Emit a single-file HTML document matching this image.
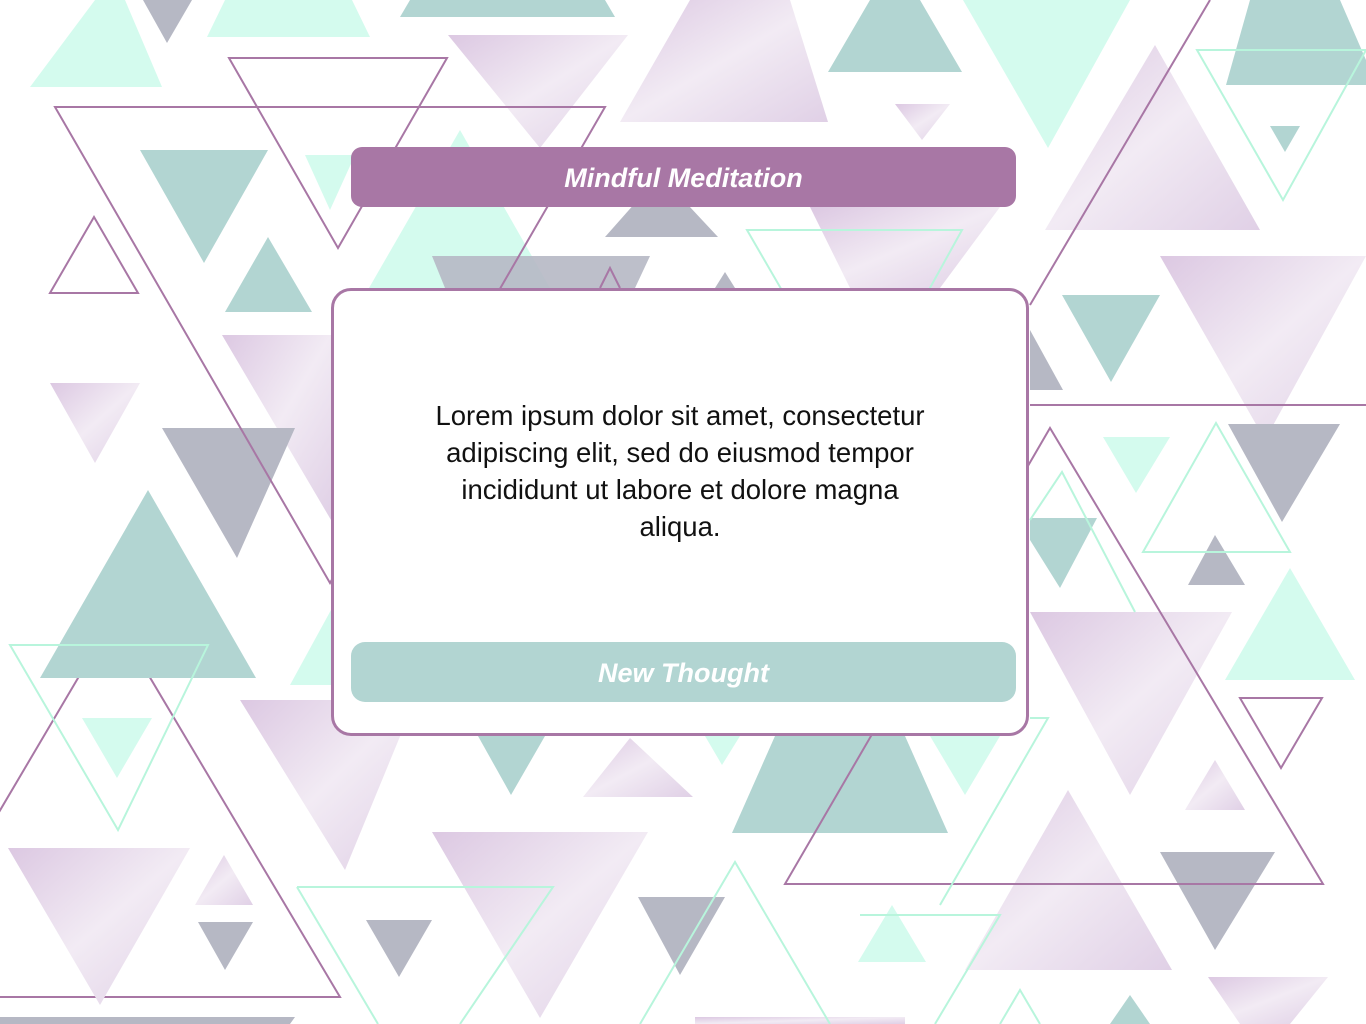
<!DOCTYPE html>
<html><head><meta charset="utf-8"><style>
html,body{margin:0;padding:0;overflow:hidden;}
body{width:1366px;height:1024px;position:relative;overflow:hidden;background:#fff;font-family:"Liberation Sans",sans-serif;}
svg.bg{position:absolute;left:0;top:0;overflow:hidden;}
.hdr{position:absolute;left:351px;top:147px;width:665px;height:60px;background:#a877a5;border-radius:11px;color:#fff;font-weight:bold;font-style:italic;font-size:27px;text-align:center;line-height:62px;}
.card{position:absolute;left:331px;top:288px;width:692px;height:442px;border:3px solid #a877a5;border-radius:20px;background:#fff;}
.txt{position:absolute;left:0;width:100%;top:106px;text-align:center;font-size:27.5px;line-height:37px;color:#111;}
.btn{position:absolute;left:351px;top:642px;width:665px;height:60px;background:#b2d5d2;border-radius:14px;color:#fff;font-weight:bold;font-style:italic;font-size:27px;text-align:center;line-height:62px;}
</style></head><body>
<svg class="bg" width="1366" height="1024" viewBox="0 0 1366 1024">
<defs>
<linearGradient id="m" x1="0" y1="0" x2="1" y2="1">
<stop offset="0" stop-color="#dcc8e2"/><stop offset="0.5" stop-color="#f2ebf4"/><stop offset="1" stop-color="#e0d0e6"/>
</linearGradient>
</defs>
<polygon points="-110,997 340,997 114,617" fill="none" stroke="#a877a5" stroke-width="2"/>
<g fill="url(#m)">
<polygon points="448,35 628,35 540,148"/>
<polygon points="620,122 690,0 790,0 828,122"/>
<polygon points="895,104 950,104 922,140"/>
<polygon points="1045,230 1155,45 1260,230"/>
<polygon points="1160,256 1366,256 1265,440"/>
<polygon points="810,207 1000,207 940,288 850,288"/>
<polygon points="222,335 331,335 331,520"/>
<polygon points="50,383 140,383 95,463"/>
<polygon points="1030,612 1232,612 1130,795"/>
<polygon points="240,700 415,700 345,870"/>
<polygon points="583,797 630,738 693,797"/>
<polygon points="432,832 648,832 540,1018"/>
<polygon points="8,848 190,848 100,1005"/>
<polygon points="195,905 224,855 253,905"/>
<polygon points="965,970 1068,790 1172,970"/>
<polygon points="1185,810 1215,760 1245,810"/>
<polygon points="1208,977 1328,977 1290,1024 1240,1024"/>
<polygon points="695,1017 905,1017 905,1024 695,1024"/>
</g>
<g fill="#d4fbee">
<polygon points="30,87 95,0 125,0 162,87"/>
<polygon points="207,37 225,0 352,0 370,37"/>
<polygon points="963,0 1130,0 1048,148"/>
<polygon points="369,288 460,130 550,288"/>
<polygon points="305,155 355,155 330,210"/>
<polygon points="1103,437 1170,437 1136,493"/>
<polygon points="1225,680 1290,568 1355,680"/>
<polygon points="82,718 152,718 117,778"/>
<polygon points="858,962 892,905 926,962"/>
<polygon points="290,685 331,610 331,685"/>
<polygon points="930,736 1000,736 965,795"/>
<polygon points="705,736 740,736 722,765"/>
</g>
<g fill="#b2d5d2">
<polygon points="400,17 410,0 605,0 615,17"/>
<polygon points="828,72 870,0 920,0 962,72"/>
<polygon points="1226,85 1250,0 1340,0 1366,60 1366,85"/>
<polygon points="140,150 268,150 204,263"/>
<polygon points="225,312 268,237 312,312"/>
<polygon points="1062,295 1160,295 1111,382"/>
<polygon points="40,678 148,490 256,678"/>
<polygon points="732,833 775,736 905,736 948,833"/>
<polygon points="478,736 545,736 511,795"/>
<polygon points="1030,518 1097,518 1060,588 1030,540"/>
<polygon points="1270,126 1300,126 1285,152"/>
<polygon points="1110,1024 1130,995 1150,1024"/>
</g>
<g fill="#b6b8c4">
<polygon points="143,0 192,0 167,43"/>
<polygon points="605,237 660,175 718,237"/>
<polygon points="432,256 650,256 635,288 445,288" opacity="0.9"/>
<polygon points="162,428 295,428 237,558"/>
<polygon points="1228,424 1340,424 1282,522"/>
<polygon points="1188,585 1215,535 1245,585"/>
<polygon points="1160,852 1275,852 1215,950"/>
<polygon points="638,897 725,897 680,975"/>
<polygon points="366,920 432,920 399,977"/>
<polygon points="198,922 253,922 225,970"/>
<polygon points="1030,330 1063,390 1030,390"/>
<polygon points="0,1017 295,1017 290,1024 0,1024"/>
<polygon points="715,288 725,272 735,288"/>
</g>
<g fill="none" stroke="#a877a5" stroke-width="2">
<polygon points="55,107 605,107 330,583"/>
<polygon points="229,58 447,58 338,248"/>
<polygon points="50,293 138,293 94,217"/>
<polygon points="785,884 1323,884 1050,428"/>
<polygon points="1240,698 1322,698 1281,768"/>
<line x1="1030" y1="305" x2="1210" y2="0"/>
<line x1="1030" y1="405" x2="1366" y2="405"/>
<polyline points="600,288 610,268 620,288"/>
</g>
<g fill="none" stroke="#b8f5dc" stroke-width="2">
<polygon points="1197,50 1366,50 1283,200"/>
<polygon points="1143,552 1290,552 1216,423"/>
<polygon points="747,230 962,230 857,420"/>
<polygon points="10,645 208,645 118,830"/>
<polyline points="297,887 553,887 460,1024"/>
<polyline points="297,887 378,1024"/>
<polyline points="640,1024 735,862 830,1024"/>
<polyline points="1030,520 1062,472 1135,612"/>
<polyline points="860,915 1000,915 935,1024"/>
<polyline points="1000,1024 1020,990 1040,1024"/>
<polyline points="1030,718 1048,718 940,905"/>
</g>
</svg>
<div class="hdr">Mindful Meditation</div>
<div class="card"><div class="txt">Lorem ipsum dolor sit amet, consectetur<br>adipiscing elit, sed do eiusmod tempor<br>incididunt ut labore et dolore magna<br>aliqua.</div></div>
<div class="btn">New Thought</div>
</body></html>
